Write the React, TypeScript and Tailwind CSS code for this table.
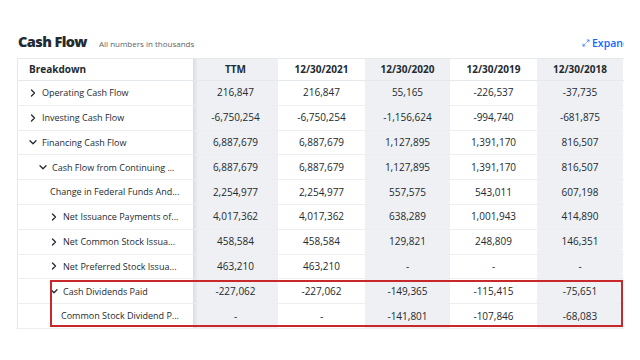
import { Maximize2 } from 'lucide-react';

type Row = {
    label: string;
    level: number;
    chevron?: 'right' | 'down';
    values: string[];
};

const columns = ['TTM', '12/30/2021', '12/30/2020', '12/30/2019', '12/30/2018'];
// widths follow the screenshot
const colWidths = ['w-[85px]', 'w-[87px]', 'w-[85px]', 'w-[87px]', 'w-[86px]'];
const shaded = [true, false, true, false, true];

const rows: Row[] = [
    { label: 'Operating Cash Flow', level: 1, chevron: 'right', values: ['216,847', '216,847', '55,165', '-226,537', '-37,735'] },
    { label: 'Investing Cash Flow', level: 1, chevron: 'right', values: ['-6,750,254', '-6,750,254', '-1,156,624', '-994,740', '-681,875'] },
    { label: 'Financing Cash Flow', level: 1, chevron: 'down', values: ['6,887,679', '6,887,679', '1,127,895', '1,391,170', '816,507'] },
    { label: 'Cash Flow from Continuing ...', level: 2, chevron: 'down', values: ['6,887,679', '6,887,679', '1,127,895', '1,391,170', '816,507'] },
    { label: 'Change in Federal Funds And...', level: 3, values: ['2,254,977', '2,254,977', '557,575', '543,011', '607,198'] },
    { label: 'Net Issuance Payments of...', level: 3, chevron: 'right', values: ['4,017,362', '4,017,362', '638,289', '1,001,943', '414,890'] },
    { label: 'Net Common Stock Issua...', level: 3, chevron: 'right', values: ['458,584', '458,584', '129,821', '248,809', '146,351'] },
    { label: 'Net Preferred Stock Issua...', level: 3, chevron: 'right', values: ['463,210', '463,210', '-', '-', '-'] },
    { label: 'Cash Dividends Paid', level: 3, chevron: 'down', values: ['-227,062', '-227,062', '-149,365', '-115,415', '-75,651'] },
    { label: 'Common Stock Dividend P...', level: 4, values: ['-', '-', '-141,801', '-107,846', '-68,083'] },
];

const indent = ['pl-[11px]', 'pl-[21px]', 'pl-[32px]', 'pl-[43px]'];

const Chevron = ({ dir }: { dir: 'right' | 'down' }) => (
    <span className="w-[13px] flex items-center shrink-0">
        <svg width="8" height="8" viewBox="0 0 8 8" fill="none" stroke="#232a31" strokeWidth="1.3" strokeLinecap="round" strokeLinejoin="round">
            {dir === 'right' ? <polyline points="2.5,1 5.5,4 2.5,7" /> : <polyline points="1,2.8 4,5.8 7,2.8" />}
        </svg>
    </span>
);

const cellBg = (i: number) =>
    i === 0
        ? 'bg-[linear-gradient(to_right,#d9dde2,#eef0f3_5px)]'
        : shaded[i]
          ? 'bg-[#eef0f3]'
          : 'bg-white';

const CashFlow = () => {
    return (
        <div className="w-[640px] h-[360px] bg-white overflow-hidden font-['Open_Sans',sans-serif] text-[#232a31]">
            <div className="relative w-[624px] h-full overflow-hidden">
                <div className="flex items-baseline pt-[32px] leading-[20px]">
                    <div className="w-[582px] shrink-0 pl-[18px] flex items-baseline">
                        <h1 className="text-[14.5px] font-extrabold tracking-[-0.6px]">Cash Flow</h1>
                        <span className="ml-[12px] text-[8px] text-[#5b636a]">All numbers in thousands</span>
                    </div>
                    <div className="flex items-center shrink-0 gap-[2px] text-[#0f69ff] text-[10.5px] font-semibold whitespace-nowrap">
                        <Maximize2 size={8} strokeWidth={2} />
                        <span>Expand</span>
                    </div>
                </div>

                <div className="mt-[4px] ml-[17px] w-[640px] border-l border-t border-[#e6e9ec]">
                    <div className="flex h-[22px] border-b border-[#e6e9ec] text-[10px] font-bold">
                        <div className="w-[175px] pl-[11px] flex items-center shrink-0">Breakdown</div>
                        {columns.map((c, i) => (
                            <div key={c} className={`${colWidths[i]} ${cellBg(i)} shrink-0 flex items-center justify-center`}>
                                {c}
                            </div>
                        ))}
                    </div>

                    {rows.map((r) => (
                        <div key={r.label} className="flex h-[24.8px] border-b border-[#eceef0]">
                            <div className={`w-[175px] ${indent[r.level - 1]} flex items-center shrink-0 text-[9px] whitespace-nowrap`}>
                                {r.chevron && <Chevron dir={r.chevron} />}
                                <span>{r.label}</span>
                            </div>
                            {r.values.map((v, i) => (
                                <div key={i} className={`${colWidths[i]} ${cellBg(i)} shrink-0 flex items-center justify-center text-[10px]`}>
                                    {v}
                                </div>
                            ))}
                        </div>
                    ))}
                </div>

                {/* highlight box drawn over the dividend rows */}
                <div className="absolute left-[50px] top-[280px] w-[573px] h-[47px] border-2 border-[#c8282a]" />
            </div>
        </div>
    );
};

export default CashFlow;
